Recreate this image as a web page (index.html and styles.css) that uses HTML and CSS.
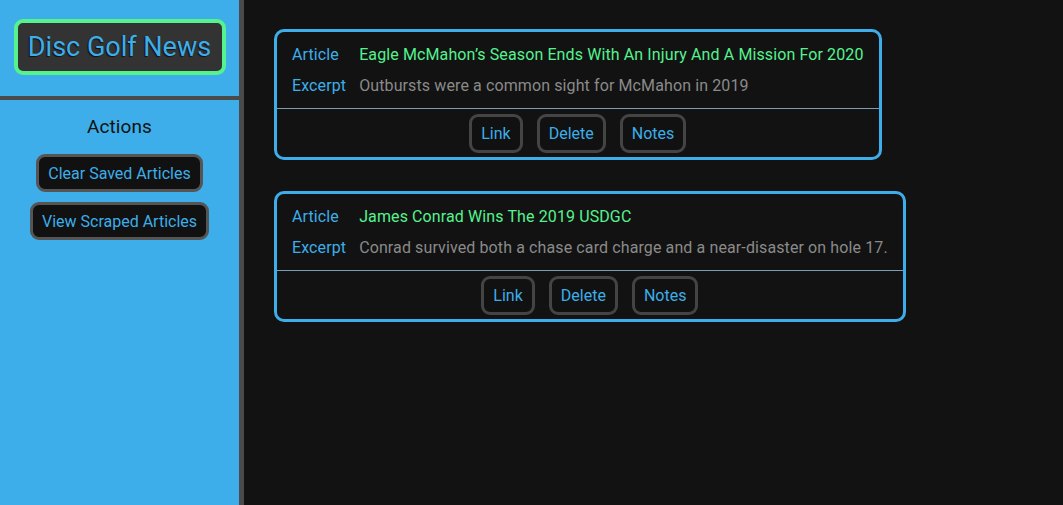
FILE: index.html
```html
<!DOCTYPE html>
<html>
<head>
<meta charset="utf-8">
<link rel="stylesheet" href="styles.css">
</head>
<body>
<aside class="sidebar">
  <div class="brand">
    <div class="brand-box">Disc Golf News</div>
  </div>
  <div class="actions">
    <h2 class="actions-title">Actions</h2>
    <button class="side-btn">Clear Saved Articles</button>
    <button class="side-btn">View Scraped Articles</button>
  </div>
</aside>
<main class="content">
  <div class="card">
    <div class="card-body">
      <span class="label">Article</span>
      <span class="title">Eagle McMahon’s Season Ends With An Injury And A Mission For 2020</span>
      <span class="label">Excerpt</span>
      <span class="excerpt">Outbursts were a common sight for McMahon in 2019</span>
    </div>
    <div class="card-footer">
      <button class="card-btn">Link</button>
      <button class="card-btn">Delete</button>
      <button class="card-btn">Notes</button>
    </div>
  </div>
  <div class="card">
    <div class="card-body">
      <span class="label">Article</span>
      <span class="title">James Conrad Wins The 2019 USDGC</span>
      <span class="label">Excerpt</span>
      <span class="excerpt">Conrad survived both a chase card charge and a near-disaster on hole 17.</span>
    </div>
    <div class="card-footer">
      <button class="card-btn">Link</button>
      <button class="card-btn">Delete</button>
      <button class="card-btn">Notes</button>
    </div>
  </div>
</main>
</body>
</html>
```
FILE: styles.css
```css
* { box-sizing: border-box; }
html, body { height: 100%; }
body {
  margin: 0;
  display: flex;
  background: #121212;
  font-family: Roboto, "Liberation Sans", sans-serif;
  font-size: 16px;
}
.sidebar {
  width: 244px;
  flex-shrink: 0;
  background: #3daee9;
  border-right: 5px solid #4a4a4a;
  height: 505px;
}
.brand {
  height: 100px;
  border-bottom: 4px solid #4a4a4a;
  padding-top: 19px;
  display: flex;
  justify-content: center;
}
.brand-box {
  width: 212px;
  height: 56px;
  border: 4px solid #55f28e;
  border-radius: 9px;
  background: #333333;
  color: #3daee9;
  font-size: 27px;
  line-height: 48px;
  text-align: center;
  text-shadow: -1px 1px 1px rgba(0,0,0,0.7);
}
.actions {
  display: flex;
  flex-direction: column;
  align-items: center;
  gap: 10px;
}
.actions-title {
  margin: 15px 0 5px;
  font-size: 19px;
  font-weight: 400;
  color: #111;
  line-height: 24px;
  letter-spacing: 0.1px;
}
.side-btn {
  height: 38px;
  padding: 0 9px;
  background: #111;
  border: 3px solid #555;
  border-radius: 9px;
  color: #3daee9;
  font-family: inherit;
  font-size: 16px;
}
.content {
  padding: 29px 30px;
  display: flex;
  flex-direction: column;
  align-items: flex-start;
  gap: 31px;
}
.card {
  border: 3px solid #3daee9;
  border-radius: 10px;
}
.card-body {
  display: grid;
  grid-template-columns: auto auto;
  column-gap: 13px;
  row-gap: 12px;
  padding: 13px 15px 13px 15px;
  line-height: 19px;
  letter-spacing: 0.11px;
  border-bottom: 1px solid #7a9db3;
}
.label { color: #3daee9; }
.title { color: #55f28e; }
.excerpt { color: #8a8a8a; }
.card-footer {
  display: flex;
  justify-content: center;
  gap: 14px;
  padding: 5px 0 4px;
}
.card-btn {
  height: 39px;
  padding: 0 9px;
  background: #111;
  border: 3px solid #444;
  border-radius: 9px;
  color: #3daee9;
  font-family: inherit;
  font-size: 16px;
}
```
